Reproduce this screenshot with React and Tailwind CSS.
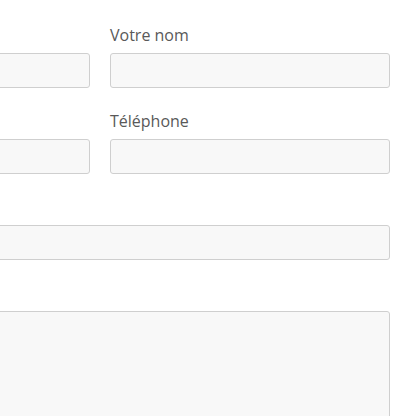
const Field = ({ label, className = "" }) => (
  <div className={`mb-5 ${className}`}>
    <label className="block h-6 text-base leading-6 mb-[7px] text-[#595959] translate-y-px">{label}</label>
    <input
      type="text"
      className="block w-full h-[35px] bg-[#f8f8f8] border border-[#cfcfcf] rounded-[3px] outline-none"
    />
  </div>
);

export default function App() {
  return (
    <div
      className="min-h-[416px] bg-white overflow-hidden pt-[22px]"
      style={{ fontFamily: '"Open Sans", sans-serif' }}
    >
      {/* left column sits mostly outside the frame */}
      <form className="-ml-[190px] w-[580px] grid grid-cols-2 gap-x-5">
        <Field label="" />
        <Field label="Votre nom" />
        <Field label="" />
        <Field label="Téléphone" />
        <Field label="" className="col-span-2" />
        <div className="col-span-2">
          <div className="h-6 mb-[7px]" />
          <textarea className="block w-full h-[200px] bg-[#f8f8f8] border border-[#cfcfcf] rounded-[3px] outline-none resize-none" />
        </div>
      </form>
    </div>
  );
}
